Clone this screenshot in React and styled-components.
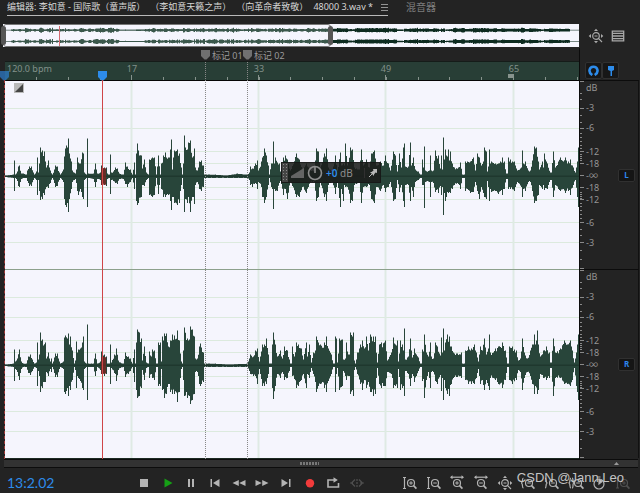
import React from "react";
import styled, { createGlobalStyle } from "styled-components";

const sans = `"Noto Sans", "Noto Sans CJK SC", sans-serif`;

const GlobalStyle = createGlobalStyle`
  *, *::before, *::after { box-sizing: border-box; }
  body { margin: 0; background: #232323; color: #9a9a9a; font: 10px/12px ${sans}; }
  button { font: inherit; color: inherit; margin: 0; padding: 0; border: 0; background: none; cursor: pointer; }
  svg { display: block; }
`;

/* ---------- waveform data: position, level above and below the axis ---------- */

const LEFT = `5 0 0;13 1 1;14 15 14;15 1 1;17 4 4;18 9 9;19 10 10;21 2 2;23 2 1;26 1 1;27 5 4;29 9 9;31 9 9;33 3 3;34 1 1;36 4 3;37 18 18;38 3 3;39 12 14;40 28 23;42 25 22;44 24 18;46 8 10;48 15 11;50 5 6;52 1 1;54 6 6;55 10 10;57 9 9;59 3 3;60 1 1;62 4 3;63 6 5;64 19 22;65 27 28;66 30 30;67 28 26;68 37 35;69 22 22;71 14 12;72 5 5;75 2 2;76 6 6;77 18 14;78 13 18;80 12 12;82 23 20;83 22 22;84 3 3;86 1 1;87 37 30;88 2 1;93 2 2;95 12 10;97 2 2;100 3 3;101 10 8;104 8 8;106 8 9;107 2 2;109 1 1;110 21 17;111 3 3;113 4 4;115 8 6;117 7 7;119 2 2;123 1 2;125 13 7;127 9 10;130 6 5;132 1 1;134 13 12;135 1 1;136 22 24;137 32 28;138 25 26;141 20 20;142 7 8;144 16 9;146 3 3;148 1 1;149 16 18;152 18 20;154 18 18;156 1 1;158 20 17;160 1 1;161 12 12;163 20 20;165 23 20;166 18 18;168 18 18;170 26 24;171 36 33;172 6 20;173 18 20;174 25 26;177 26 28;179 22 26;181 8 8;182 1 1;183 12 12;184 40 35;185 28 22;187 26 26;188 33 20;190 35 35;192 18 20;194 27 27;195 8 8;197 5 5;199 14 12;201 15 14;203 10 10;204 1 1;215 1 1;226 0 1;237 2 1;247 1 1;249 3 3;250 9 8;252 7 10;255 12 6;257 15 12;258 5 5;261 14 10;262 18 20;264 27 26;266 20 20;268 10 8;269 1 1;271 12 10;272 12 12;273 34 32;274 12 12;275 18 14;277 13 14;279 12 6;280 4 4;283 18 18;285 20 12;287 16 22;290 5 5;296 22 20;299 16 20;302 5 10;306 12 16;310 5 5;314 5 5;316 27 24;318 24 20;320 8 6;324 22 20;326 27 24;328 8 8;332 5 5;335 20 17;337 5 6;340 23 30;341 10 12;343 12 24;344 10 8;345 32 10;347 10 10;350 28 26;352 26 24;354 8 8;359 6 6;361 26 26;363 10 10;366 16 10;369 8 8;371 22 22;374 25 26;376 10 10;380 14 14;383 10 8;385 20 15;388 12 10;390 5 5;393 24 24;395 20 22;397 4 3;399 22 15;401 8 8;403 28 24;404 32 30;405 9 8;408 9 8;410 33 24;411 10 10;413 18 20;415 6 5;418 4 3;420 1 1;421 1 1;422 16 8;423 8 8;424 29 31;425 5 5;429 5 5;430 20 20;431 5 5;433 5 6;435 25 15;438 20 16;440 7 9;441 20 18;442 6 10;443 38 38;444 16 16;445 26 24;446 20 20;448 26 16;449 15 15;450 24 16;452 12 12;454 8 8;458 8 7;460 13 12;462 1 1;464 1 1;465 14 14;467 14 12;470 14 16;473 18 15;475 5 5;477 22 14;479 18 22;481 10 10;483 14 16;484 28 20;486 24 22;487 4 4;488 9 10;489 26 24;490 12 12;491 14 15;495 12 14;498 12 17;500 14 14;502 18 18;504 14 12;506 2 2;507 2 2;508 18 12;510 16 12;514 14 14;517 5 5;521 8 10;522 25 20;523 12 12;525 14 14;528 5 5;530 5 5;532 15 14;534 29 26;536 28 24;538 14 18;539 6 8;542 14 12;543 8 8;544 22 13;547 12 12;550 3 3;551 3 3;553 24 20;555 8 8;558 14 12;560 18 14;563 14 12;565 18 16;568 14 14;570 16 18;573 8 8;575 3 3;577 14 20;578 28 30`;

const RIGHT = `5 0 0;13 1 1;14 15 15;15 3 3;17 6 6;19 15 14;21 3 3;23 1 1;26 1 1;28 8 7;30 10 9;32 5 5;34 1 1;36 2 2;37 22 20;38 5 5;39 10 10;40 32 26;42 25 22;45 22 16;46 6 6;48 12 10;50 3 3;51 6 6;52 1 1;54 7 7;55 11 11;57 11 11;59 3 3;60 1 1;63 3 3;64 27 26;65 29 28;67 26 22;68 31 30;69 20 20;70 28 24;72 14 14;74 1 1;75 4 4;76 23 22;77 12 10;78 15 12;80 16 15;82 22 22;83 28 24;84 3 3;86 1 1;87 40 34;88 1 1;93 1 1;95 11 10;97 1 1;100 3 4;101 13 8;104 10 10;106 8 8;107 1 1;109 1 1;110 20 18;111 2 2;114 10 7;115 9 8;116 16 15;118 4 4;120 2 2;123 1 1;125 12 11;128 8 8;130 6 5;132 1 1;134 15 16;135 1 1;136 22 24;137 35 32;139 32 30;141 26 22;142 4 4;144 18 14;146 2 2;148 1 1;149 13 12;151 8 8;152 15 12;154 14 14;156 1 1;157 1 1;158 22 20;160 22 20;161 3 3;162 28 24;164 31 32;166 31 28;168 18 18;170 24 26;172 30 28;174 29 28;177 34 36;179 24 26;181 3 3;182 1 1;183 14 14;184 37 30;187 26 32;189 25 30;190 38 38;192 35 34;194 28 28;195 6 6;197 6 6;199 18 18;200 21 20;203 12 16;204 1 1;215 1 1;228 0 1;247 1 1;250 10 8;253 8 10;255 14 10;257 16 18;259 3 3;260 8 8;262 20 20;264 20 20;266 26 18;268 10 8;269 1 1;271 1 1;272 20 22;273 32 33;275 20 20;277 8 8;280 14 12;282 6 6;284 18 14;287 14 12;289 5 5;290 1 1;291 1 1;292 18 10;294 8 13;296 22 22;298 20 20;301 16 14;303 5 8;306 22 22;307 8 8;309 20 12;311 2 2;313 12 8;315 14 16;316 28 26;318 22 20;320 20 18;324 22 22;326 28 26;328 16 15;331 10 8;333 1 1;334 1 1;335 28 26;336 26 8;337 2 2;339 26 24;342 25 20;343 5 5;345 6 10;346 22 14;348 10 10;349 10 10;350 32 28;352 28 24;353 32 30;354 4 4;355 1 1;357 12 8;360 20 18;362 24 24;364 16 14;366 28 22;368 14 16;370 30 26;373 28 30;375 28 28;377 2 2;379 20 18;381 22 22;384 22 20;385 24 20;387 4 6;391 12 8;393 27 22;395 20 20;397 24 22;398 3 3;400 24 24;402 20 22;403 14 20;404 36 30;405 5 5;408 8 8;410 26 20;412 7 8;414 16 16;416 10 10;418 7 5;420 1 1;421 1 1;422 15 15;423 13 13;424 30 32;426 12 14;428 8 6;430 22 22;431 8 6;433 6 6;435 22 15;437 18 18;440 9 9;441 27 25;442 12 12;443 36 34;444 14 14;445 22 22;447 30 28;449 28 30;451 18 18;453 12 12;457 11 11;461 12 12;462 1 1;464 1 1;465 14 14;468 18 18;471 16 18;474 20 18;476 12 12;478 3 3;480 18 18;482 14 14;484 26 24;486 10 14;488 16 20;489 30 24;490 12 12;493 12 12;495 16 14;498 18 18;502 22 22;505 14 14;507 1 1;508 1 1;509 18 14;512 18 18;516 14 14;518 4 4;520 6 6;522 26 24;524 12 12;527 6 6;530 14 10;532 20 18;534 30 28;535 20 20;537 34 28;538 20 24;540 8 8;543 14 12;546 18 14;549 12 12;550 2 2;551 2 2;553 26 30;555 12 12;560 16 12;564 24 18;567 20 18;570 24 20;572 14 14;574 2 2;576 12 20;578 30 34`;

const noise = (n) => {
  const v = Math.sin(n * 127.1 + 11.7) * 43758.5453;
  return v - Math.floor(v);
};

const expand = (text) => {
  const points = text.split(";").map((p) => p.split(" ").map(Number));
  const out = [];
  for (let i = 0; i < points.length - 1; i++) {
    const [x0, u0, d0] = points[i];
    const [x1, u1, d1] = points[i + 1];
    for (let x = x0; x < x1; x++) {
      const t = (x - x0) / (x1 - x0);
      const k = x === x0 ? 1 : 0.78 + 0.22 * noise(x + u0);
      out.push([(u0 + (u1 - u0) * t) * k, (d0 + (d1 - d0) * t) * k]);
    }
  }
  out.push(points[points.length - 1].slice(1));
  return out;
};

const left = expand(LEFT);
const right = expand(RIGHT);

const barPath = (samples, axis) =>
  samples
    .map(([u, d], x) => `M${x} ${(axis - u - 0.4).toFixed(1)}h1V${(axis + d + 1).toFixed(1)}h-1z`)
    .join("");

const overviewPath = (samples, axis, from, to) => {
  let d = "";
  for (let x = from; x < to; x++) {
    let level;
    if (x < 328) level = samples[Math.min(573, Math.floor(x * 1.75))][0];
    else if (x > 564) level = 0;
    else level = 10 + 22 * noise(Math.floor(x / 4)) * (0.5 + noise(x) / 2) - (noise(Math.floor(x / 7) + 5) < 0.14 ? 12 : 0);
    const h = level < 1 ? 0.4 : Math.min(2.5, 0.6 + level * 0.06);
    d += `M${x} ${(axis - h).toFixed(1)}h1v${(h * 2).toFixed(1)}h-1z`;
  }
  return d;
};

const GRID_Y = [27, 47, 70, 82, 106, 118, 141, 161];
const GRID_X = [126, 253, 380, 508];
const pct = (x) => `${(x / 574) * 100}%`;

/* ---------- top area ---------- */

const Page = styled.main`
  position: relative;
  display: flex;
  flex-direction: column;
  overflow: hidden;
`;

const TabBar = styled.nav`
  display: flex;
  height: 24px;
  padding-left: 7px;
  gap: 18px;
  white-space: nowrap;
`;

const Tab = styled.button`
  display: flex;
  align-items: center;
  gap: 8px;
  height: 16px;
  padding-bottom: 1px;
  font-size: ${(p) => (p.$active ? "9px" : "10px")};
  color: ${(p) => (p.$active ? "#d6d6d6" : "#7d7d7d")};
  border-bottom: 1px solid ${(p) => (p.$active ? "#b9b9b9" : "transparent")};
`;

const TabTitle = styled.span`
  display: flex;
  gap: 5px;
  text-spacing-trim: space-all;
`;

const OverviewRow = styled.section`
  display: grid;
  grid-template-columns: minmax(0, 1fr) 61px;
  height: 24px;
  padding-left: 3px;
`;

const Overview = styled.div`
  position: relative;
  height: 23px;
  background: #f5f5fd;
  padding-left: 2px;
`;

const OverviewWindow = styled.div`
  position: absolute;
  inset: 0 auto 0 0;
  width: 57%;
  border: 1px solid #777;
  border-radius: 3px;
`;

const WindowHandle = styled.span`
  position: absolute;
  top: 1px;
  bottom: 1px;
  ${(p) => p.$side}: -3px;
  width: 5px;
  border-radius: 3px;
  background: #555;
`;

const OverviewCursor = styled.span`
  position: absolute;
  top: 2px;
  bottom: 1px;
  left: ${(p) => p.$left};
  width: 1px;
  background: #d46a70;
`;

const OverviewTools = styled.div`
  display: flex;
  align-items: center;
  gap: 6px;
  padding-left: 9px;
`;

const IconButton = styled.button`
  display: grid;
  place-items: center;
  width: 16px;
  height: 16px;
  color: #a9a9a9;
`;

/* ---------- editor ---------- */

const Editor = styled.section`
  display: grid;
  grid-template-columns: minmax(0, 1fr) 61px;
  padding-left: 5px;
`;

const Timeline = styled.div`
  position: relative;
`;

const MarkerLane = styled.div`
  height: 13px;
`;

const Ruler = styled.div`
  height: 20px;
  background: #283e36;
  border-bottom: 1px solid #050505;
  border-top: 1px solid #151c19;
`;

const RulerLabel = styled.span`
  position: absolute;
  top: 15px;
  left: ${(p) => p.$left};
  font-size: 9px;
  color: #82918a;
  transform: translateX(${(p) => (p.$center ? "-50%" : "0")});
`;

const Channel = styled.div`
  height: 189px;
  background: #f5f5fd;
  border-bottom: 1px solid ${(p) => (p.$last ? "#1c2a23" : "#8ca08c")};
`;

const Marker = styled.div`
  position: absolute;
  top: 2px;
  bottom: 0;
  left: ${(p) => p.$left};
  display: flex;
  align-items: flex-start;
  gap: 2px;
  margin-left: -4px;
  font-size: 9px;
  line-height: 11px;
  white-space: nowrap;
  color: #9a9a9a;

  &::after {
    content: "";
    position: absolute;
    top: 12px;
    bottom: 0;
    left: 4px;
    border-left: 1px dotted #888;
  }
`;

const Playhead = styled.div`
  position: absolute;
  top: 23px;
  bottom: 0;
  left: ${(p) => p.$left};
  width: 9px;
  margin-left: ${(p) => (p.$dim ? "-5px" : "-4px")};

  &::after {
    content: "";
    position: absolute;
    top: 9px;
    bottom: 0;
    left: 4px;
    border-left: 1px ${(p) => (p.$dim ? "dashed #a03a3a" : "solid #cf4548")};
  }
  svg { opacity: ${(p) => (p.$dim ? 0.6 : 1)}; }
`;

const EndFlag = styled.span`
  position: absolute;
  top: 26px;
  left: ${(p) => p.$left};
  width: 6px;
  height: 4px;
  margin-left: -4px;
  background: #87938d;
`;

const FadeHandle = styled.button`
  position: absolute;
  top: 35px;
  left: 9px;
`;

const Hud = styled.div`
  position: absolute;
  top: 114px;
  left: ${(p) => p.$left};
  display: flex;
  align-items: center;
  width: 100px;
  height: 21px;
  padding-right: 2px;
  gap: 3px;
  background: rgba(27, 29, 28, 0.87);
  border: 1px solid rgba(20, 20, 20, 0.6);
  color: #8e8e8e;
`;

const HudGrip = styled.span`
  align-self: stretch;
  width: 6px;
  background: radial-gradient(circle, #8a8a8a 0 1px, transparent 1px) 0 3px / 3px 3px #454545;
`;

const HudValue = styled.span`
  font-size: 10px;
  b { color: #2d8ceb; font-weight: 600; }
`;

const HudPin = styled.button`
  margin-left: auto;
  padding-left: 3px;
  border-left: 1px solid #303030;
`;

/* ---------- level scale ---------- */

const ScaleColumn = styled.div`
  border-left: 1px solid #0c0c0c;
`;

const SnapTools = styled.div`
  display: flex;
  height: 32px;
  padding: 14px 0 1px 5px;
`;

const SnapButton = styled.button`
  display: grid;
  place-items: center;
  width: 17px;
  border: 1px solid #303030;
  border-radius: 2px;
  background: #171717;
  color: #2d8ceb;
`;

const Scale = styled.div`
  display: grid;
  grid-template-columns: 5px 33px 17px 1fr;
  height: 189px;
  border-top: 1px solid #0c0c0c;
  border-right: 1px solid #111;
  margin-right: 1px;
`;

const ScaleLabels = styled.ol`
  display: grid;
  grid-template-rows: 20px 20px 24px 12px 12px 12px 12px 23px 20px 12px;
  margin: 0;
  padding: 1px 0 0 1px;
  list-style: none;
  font-size: 9px;
  color: #959595;
`;

const ChannelButton = styled.button`
  align-self: center;
  height: 13px;
  border: 1px solid #303030;
  border-radius: 2px;
  background: #151515;
  color: #2d86ee;
  font-size: 8px;
  line-height: 10px;
  font-weight: 700;
`;

/* ---------- bottom area ---------- */

const ScrollBar = styled.div`
  display: grid;
  grid-template-columns: 1fr 24px;
  align-items: center;
  height: 9px;
  margin: 0 2px 0 4px;
  background: #323232;
  border: solid #0c0c0c;
  border-width: 1px 0;
`;

const Grip = styled.span`
  justify-self: center;
  width: 19px;
  height: 3px;
  background: repeating-linear-gradient(90deg, #777 0 2px, transparent 2px 3px);
`;

const Transport = styled.footer`
  display: flex;
  align-items: center;
  height: 25px;
  padding: 5px 5px 0 7px;
`;

const Timecode = styled.output`
  width: 125px;
  font: 14px/18px Lato, sans-serif;
  color: #2d8ceb;
`;

const ButtonGroup = styled.div`
  display: grid;
  grid-template-columns: repeat(10, 1fr);
  justify-items: center;
  width: 237px;
  margin-left: ${(p) => (p.$end ? "auto" : "0")};
`;

const TransportButton = styled(IconButton)`
  color: ${(p) => p.$color || "#b4b4b4"};
  opacity: ${(p) => (p.disabled ? 0.3 : 1)};
`;

const Watermark = styled.div`
  position: absolute;
  right: 16px;
  bottom: 7px;
  font: 13px/16px "Liberation Sans", sans-serif;
  color: #c4c4c4;
  pointer-events: none;
`;

/* ---------- drawings ---------- */

const Icon = ({ children, size = 16 }) => (
  <svg width={size} height={size} viewBox="0 0 16 16" fill="none" stroke="currentColor" strokeWidth="1.2" aria-hidden="true">
    {children}
  </svg>
);

const solid = { fill: "currentColor", stroke: "none" };

const Lens = ({ plus, cx = 9 }) => (
  <>
    <circle cx={cx} cy="8" r="3.5" />
    <path d={`M${cx + 2.6} 10.6L${cx + 5.4} 13.6`} strokeWidth="1.6" />
    <path d={`M${cx - 1.8} 8h3.6${plus ? `M${cx} 6.2v3.6` : ""}`} strokeWidth="1" />
  </>
);

const FourWay = () => (
  <>
    <circle cx="8" cy="8" r="3.3" />
    <path d="M6.5 8h3M10.4 10.4L14 14" />
    <path d="M8 .7L10 3H6zM8 15.3L6 13h4zM.7 8L3 6v4zM15.3 8L13 6v4z" {...solid} />
  </>
);

const playback = [
  ["Stop", <path d="M4 4h8v8H4z" {...solid} />],
  ["Play", <path d="M4.5 3.5L12.5 8l-8 4.5z" {...solid} />, "#16a016"],
  ["Pause", <path d="M5 4h2v8H5zM9 4h2v8H9z" {...solid} />],
  ["Go to previous", <path d="M3.5 4H5v8H3.5zM12.5 4v8L6 8z" {...solid} />],
  ["Rewind", <path d="M7.8 5v6L1.500 8zM14.500 5v6L8.2 8z" {...solid} />],
  ["Fast forward", <path d="M1.500 5v6l6.300-3zM8.2 5v6L14.500 8z" {...solid} />],
  ["Go to next", <path d="M3.5 4v8L10 8zM11 4h1.5v8H11z" {...solid} />],
  ["Record", <circle cx="8" cy="8.3" r="4.2" {...solid} />, "#f23b3b"],
  ["Loop", <><path d="M4.5 5H3v7h10.500V8M4.5 5H9" strokeWidth="1.6" /><path d="M8.5 2.2L12.8 5 8.5 7.8z" {...solid} /></>],
  ["Skip selection", <><path d="M6 4.5L2.5 8 6 11.5M10 4.5L13.5 8 10 11.5M1 8h3M11 8h4M8 4v2M8 7v2M8 10v2" /></>, null, true],
];

const zooms = [
  ["Zoom in amplitude", <><path d="M2.5 2.500v11M1 2.500h3M1 13.500h3" /><Lens plus /></>],
  ["Zoom out amplitude", <><path d="M2.5 2.500v11M1 2.500h3M1 13.500h3" /><Lens /></>],
  ["Zoom in time", <><path d="M2 2.2h12" /><path d="M1 2.2l2.5-2v4zM15 2.2l-2.5-2v4z" {...solid} /><Lens plus cx={8} /></>],
  ["Zoom out time", <><path d="M2 2.2h12" /><path d="M1 2.2l2.5-2v4zM15 2.2l-2.5-2v4z" {...solid} /><Lens cx={8} /></>],
  ["Zoom out full", <FourWay />],
  ["Zoom to in point", <><path d="M3.5 3C1.5 3 3.5 8 1 8c2.5 0 .5 5 2.5 5" /><Lens /></>],
  ["Zoom to out point", <><path d="M1 3c2 0 0 5 2.5 5C1 8 3 13 1 13" /><Lens /></>],
  ["Zoom to selection", <><path d="M3 3C1 3 3 8 .5 8 3 8 1 13 3 13M4 3c2 0 0 5 2 5-2 0 0 5-2 5" /><Lens cx={10} /></>],
  ["Timed record", <><circle cx="8" cy="9" r="5" /><path d="M8 4v5l3-2.5M6.5 2h3" /><path d="M8 3.5L12 6 8 9z" {...solid} /></>],
  ["Reset zoom", <><path d="M2.5 3v10M1 3h3M1 13h3" /><Lens plus /></>, null, true],
];

const TransportButtons = ({ items, end }) => (
  <ButtonGroup $end={end}>
    {items.map(([label, art, color, disabled]) => (
      <TransportButton key={label} aria-label={label} $color={color} disabled={disabled}>
        <Icon>{art}</Icon>
      </TransportButton>
    ))}
  </ButtonGroup>
);

const ChannelWave = ({ samples }) => (
  <svg width="100%" height="188" viewBox="0 0 574 188" preserveAspectRatio="none" aria-hidden="true">
    {GRID_Y.map((y) => <path key={y} d={`M0 ${y + 0.5}H574`} stroke="#dceade" />)}
    {GRID_X.map((x) => <path key={x} d={`M${x + 0.5} 0V188`} stroke="#dfeae4" strokeWidth="2" />)}
    <path d={barPath(samples, 95)} fill="#28453a" />
    <path d="M0 95.2H574" stroke="#1c3329" />
    <path d="M96 87h5v17h-5z" fill="#8f1d1d" fillOpacity=".6" />
  </svg>
);

const Ticks = () => {
  const minor = [12, 18, 34, 41, 52, 56, 60, 64, 67, 73, 75, 77, 79, 111, 113, 115, 117, 122, 125, 129, 133, 137, 148, 154, 169, 178];
  return (
    <svg width="5" height="188" stroke="#8a8a8a" aria-hidden="true">
      <path d={minor.map((y) => `M0 ${y + 0.5}h2`).join("")} />
      <path d={[0, ...GRID_Y, 94, 187].map((y) => `M0 ${y + 0.5}h4`).join("")} />
    </svg>
  );
};

const Flag = ({ color }) => (
  <svg width="9" height="10" aria-hidden="true">
    <path d="M0 0h9v6L5.5 9.5h-2L0 6z" fill={color} />
  </svg>
);

const LevelScale = ({ name }) => (
  <Scale>
    <Ticks />
    <ScaleLabels>
      {["dB", "-3", "-6", "-12", "-18", "-∞", "-18", "-12", "-6", "-3"].map((t, i) => <li key={i}>{t}</li>)}
    </ScaleLabels>
    <ChannelButton aria-label={`Channel ${name}`}>{name}</ChannelButton>
  </Scale>
);

export default function App() {
  const small = Array.from({ length: 18 }, (_, i) => 31 + Math.round(i * 31.8));
  return (
    <>
      <GlobalStyle />
      <Page>
        <TabBar>
          <Tab $active>
            <TabTitle>
              <span>编辑器: 李如意 - 国际歌（童声版）</span>
              <span>（李如意天籁之声）</span>
              <span>（向革命者致敬）</span>
              <span>48000 3.wav *</span>
            </TabTitle>
            <svg width="7" height="7" stroke="#929292" aria-hidden="true"><path d="M0 .5h7M0 3.5h7M0 6.5h7" /></svg>
          </Tab>
          <Tab>混音器</Tab>
        </TabBar>

        <OverviewRow>
          <Overview>
            <svg width="100%" height="23" viewBox="0 0 574 23" preserveAspectRatio="none" aria-hidden="true">
              <path d="M0 6.2H574M0 17.5H574" stroke="#41594f" strokeWidth=".7" />
              <path d={overviewPath(left, 6.2, 6, 327) + overviewPath(right, 17.5, 6, 327)} fill="#3b584c" />
              <path d={overviewPath(left, 6.2, 327, 565) + overviewPath(right, 17.5, 327, 565)} fill="#0d2b20" />
            </svg>
            <OverviewCursor $left={pct(56)} />
            <OverviewWindow>
              <WindowHandle $side="left" />
              <WindowHandle $side="right" />
            </OverviewWindow>
          </Overview>
          <OverviewTools>
            <IconButton aria-label="Zoom out full"><Icon><FourWay /></Icon></IconButton>
            <IconButton aria-label="Show list">
              <Icon size={14}><path d="M1.5 2.5h13v11h-13zM2 5h12M2 8h12M2 11h12" strokeWidth="1.500" /></Icon>
            </IconButton>
          </OverviewTools>
        </OverviewRow>

        <Editor>
          <Timeline>
            <MarkerLane />
            <Ruler>
              <svg width="100%" height="18" viewBox="0 0 574 18" preserveAspectRatio="none" stroke="#87938d" aria-hidden="true">
                <path d={small.map((x) => `M${x + 0.5} 15v3`).join("")} />
                <path d={GRID_X.map((x) => `M${x + 0.5} 13v5`).join("")} />
              </svg>
            </Ruler>
            <Channel><ChannelWave samples={left} /></Channel>
            <Channel $last><ChannelWave samples={right} /></Channel>

            <RulerLabel $left="2px">120.0 bpm</RulerLabel>
            {["17", "33", "49", "65"].map((t, i) => (
              <RulerLabel key={t} $center $left={pct(GRID_X[i] + 1)}>{t}</RulerLabel>
            ))}
            <EndFlag $left={pct(507)} />
            <Marker $left={pct(200)}><Flag color="#707070" />标记 01</Marker>
            <Marker $left={pct(242)}><Flag color="#707070" />标记 02</Marker>
            <Playhead $left={pct(0)} $dim><Flag color="#2d8ceb" /></Playhead>
            <Playhead $left={pct(97)}><Flag color="#2d8ceb" /></Playhead>
            <FadeHandle aria-label="Fade in">
              <svg width="10" height="10" aria-hidden="true">
                <path d="M0 0h10v10H0z" fill="#b9b9b9" /><path d="M9 1v8H1z" fill="#444" />
              </svg>
            </FadeHandle>
            <Hud $left={pct(276)}>
              <HudGrip />
              <svg width="13" height="10" aria-hidden="true"><path d="M0 10V8L13 0v10z" fill="#646464" /></svg>
              <svg width="16" height="16" fill="none" stroke="#8e8e8e" strokeWidth="1.6" aria-hidden="true">
                <circle cx="8" cy="8" r="6.5" /><path d="M8 2v6" />
              </svg>
              <HudValue><b>+0</b> dB</HudValue>
              <HudPin aria-label="Pin">
                <svg width="10" height="10" aria-hidden="true">
                  <path d="M9 1v4L7.5 4.5 6 6.500V8L2 4h1.500L5.500 2.500 5 1z" fill="#b8b8b8" /><path d="M4 6L1 9" stroke="#b8b8b8" />
                </svg>
              </HudPin>
            </Hud>
          </Timeline>

          <ScaleColumn>
            <SnapTools>
              <SnapButton aria-label="Snapping">
                <svg width="11" height="11" fill="none" stroke="currentColor" strokeWidth="2.6" aria-hidden="true">
                  <path d="M4.300 10C-.5 7 1.500 1.800 5.500 1.800S11.500 7 6.700 10" />
                </svg>
              </SnapButton>
              <SnapButton aria-label="Snap to markers">
                <svg width="8" height="12" fill="currentColor" aria-hidden="true"><path d="M1 1h6v4L5 6v5H3.500V6L1 5z" /></svg>
              </SnapButton>
            </SnapTools>
            <LevelScale name="L" />
            <LevelScale name="R" />
          </ScaleColumn>
        </Editor>

        <ScrollBar>
          <Grip />
          <svg width="5" height="3" aria-hidden="true"><path d="M0 3l2.500-3L5 3z" fill="#999" /></svg>
        </ScrollBar>

        <Transport>
          <Timecode>13:2.02</Timecode>
          <TransportButtons items={playback} />
          <TransportButtons items={zooms} end />
        </Transport>
        <Watermark>CSDN @Jann.Leo</Watermark>
      </Page>
    </>
  );
}
